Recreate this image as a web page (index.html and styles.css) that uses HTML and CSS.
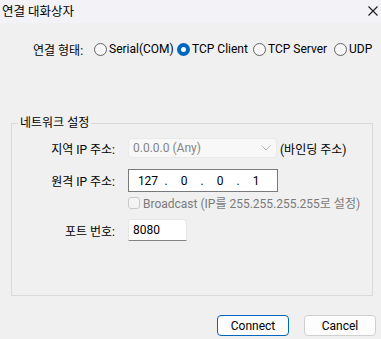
FILE: index.html
```html
<!DOCTYPE html>
<html lang="ko">
<head>
  <meta charset="UTF-8">
  <title>연결 대화상자</title>
  <link rel="stylesheet" href="styles.css">
</head>
<body>
  <div class="titlebar">
    <span class="title">연결 대화상자</span>
    <svg class="close" width="10" height="10" viewBox="0 0 10 10">
      <path d="M0.5 0.5 L9.5 9.5 M9.5 0.5 L0.5 9.5" stroke="#1a1a1a" stroke-width="1.1" fill="none"/>
    </svg>
  </div>

  <div class="mode-row">
    <span class="mode-label">연결 형태:</span>
    <label class="radio w-serial"><span class="dot"></span>Serial(COM)</label>
    <label class="radio w-client"><span class="dot checked"></span>TCP Client</label>
    <label class="radio w-server"><span class="dot"></span>TCP Server</label>
    <label class="radio"><span class="dot"></span>UDP</label>
  </div>

  <fieldset class="group">
    <legend>네트워크 설정</legend>

    <div class="row row-local">
      <span class="row-label">지역 IP 주소:</span>
      <div class="combo">
        <span>0.0.0.0 (Any)</span>
        <svg width="10" height="6" viewBox="0 0 10 6">
          <path d="M0.5 0.5 L5 5 L9.5 0.5" stroke="#b5b5b5" stroke-width="1" fill="none"/>
        </svg>
      </div>
      <span class="hint">(바인딩 주소)</span>
    </div>

    <div class="row row-remote">
      <span class="row-label">원격 IP 주소:</span>
      <div class="ipbox">
        <span class="octet">127</span><span class="sep">.</span>
        <span class="octet">0</span><span class="sep">.</span>
        <span class="octet">0</span><span class="sep">.</span>
        <span class="octet">1</span>
      </div>
    </div>

    <div class="row row-check">
      <span class="row-label"></span>
      <span class="checkbox"></span>
      <span class="check-text">Broadcast (IP를 255.255.255.255로 설정)</span>
    </div>

    <div class="row row-port">
      <span class="row-label">포트 번호:</span>
      <div class="portbox">8080</div>
    </div>
  </fieldset>

  <div class="buttons">
    <button class="btn btn-default">Connect</button>
    <button class="btn">Cancel</button>
  </div>
</body>
</html>
```

FILE: styles.css
```css
body {
  margin: 0;
  width: 381px;
  height: 339px;
  overflow: hidden;
  background-color: #f0f0f0;
  font-family: Roboto, "Noto Sans CJK KR", sans-serif;
  font-size: 12px;
  color: #000;
}
.titlebar {
  height: 23px;
  display: flex;
  align-items: center;
  justify-content: space-between;
  padding: 0 3px 0 2px;
  background-color: #f3f2f6;
}
.title {
  font-size: 12.5px;
  margin-top: -2px;
}
.close {
  margin-top: -1px;
}

/* connection type */
.mode-row {
  display: flex;
  align-items: center;
  height: 16px;
  margin-top: 18px;
  padding-left: 33px;
}
.mode-label {
  width: 61px;
}
.radio {
  display: flex;
  align-items: center;
  gap: 2px;
}
.w-serial { width: 83px; }
.w-client { width: 76px; }
.w-server { width: 81px; }
.dot {
  box-sizing: border-box;
  width: 13px;
  height: 13px;
  border-radius: 50%;
  border: 1px solid #636363;
  background-color: #f6f6f6;
}
.dot.checked {
  border: 4px solid #0067c0;
  background-color: #fff;
}

/* group box */
.group {
  margin: 59px 0 0 11px;
  width: 362px;
  box-sizing: border-box;
  padding: 8px 0 54px 0;
  border: 1px solid #dadada;
}
.group legend {
  margin-left: 6px;
  padding: 0 2px;
  line-height: 14px;
}
.row {
  display: flex;
  align-items: center;
}
.row-label {
  width: 103px;
  margin-right: 13px;
  text-align: right;
}
.row-local { height: 20px; }
.row-remote { height: 23px; margin-top: 11px; }
.row-check { height: 13px; margin-top: 4px; }
.row-port { height: 22px; margin-top: 10px; }

.combo {
  box-sizing: border-box;
  width: 149px;
  height: 20px;
  display: flex;
  align-items: center;
  justify-content: space-between;
  padding: 0 5px 0 4px;
  background-color: #f8f8f8;
  border: 1px solid #e9e9e9;
  border-radius: 3px;
  color: #858585;
}
.hint {
  margin-left: 3px;
}
.ipbox {
  box-sizing: border-box;
  width: 150px;
  height: 23px;
  display: flex;
  align-items: center;
  padding-left: 6px;
  background-color: #fff;
  border: 1px solid #7a7a7a;
}
.octet {
  width: 26px;
  text-align: center;
}
.sep {
  width: 10px;
  text-align: center;
}
.checkbox {
  box-sizing: border-box;
  width: 12px;
  height: 12px;
  border: 1px solid #cacaca;
  border-radius: 3px;
  background-color: #f4f4f4;
}
.check-text {
  margin-left: 3px;
  color: #7a7a7a;
}
.portbox {
  box-sizing: border-box;
  width: 59px;
  height: 22px;
  display: flex;
  align-items: center;
  padding-left: 4px;
  background-color: #fff;
  border: 1px solid #e6e6e6;
  border-bottom-color: #838383;
  border-radius: 3px 3px 0 0;
}

/* buttons */
.buttons {
  display: flex;
  justify-content: flex-end;
  gap: 15px;
  padding-right: 5px;
  margin-top: 19px;
}
.btn {
  width: 72px;
  height: 21px;
  padding: 0;
  font-family: inherit;
  font-size: 12px;
  color: #000;
  background-color: #fdfdfd;
  border: 1px solid #d0d0d0;
  border-radius: 4px;
}
.btn-default {
  border-color: #0067c0;
}
```
